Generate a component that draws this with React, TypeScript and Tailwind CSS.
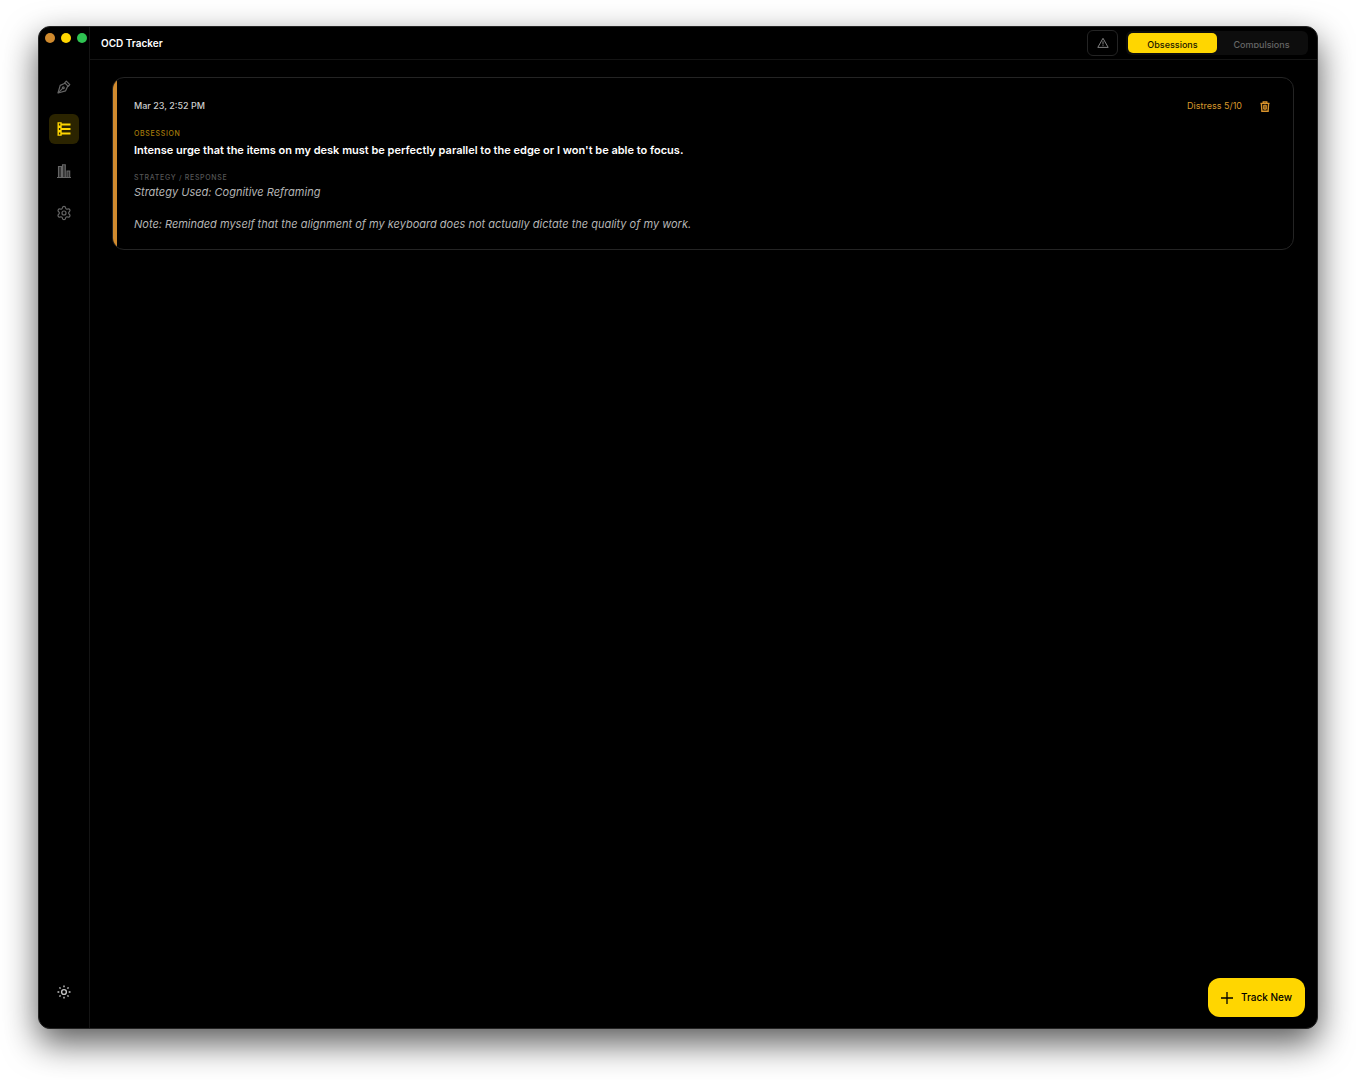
import React, { useState } from 'react'
import { Settings } from 'lucide-react'

type IconProps = { className?: string }

const PenIcon: React.FC<IconProps> = ({ className }) => (
  <svg viewBox="0 0 14 14" fill="none" stroke="currentColor" strokeWidth="1.2" strokeLinejoin="round" className={className}>
    <path d="M9.3 1.2L12.8 4.7L11.2 6.3L7.7 2.8z" />
    <path d="M8 3.2L3.2 5.4L1 13L8.6 10.8L10.8 6" />
    <path d="M1.2 12.8L5.6 8.4" />
    <circle cx="6.3" cy="7.7" r=".9" />
  </svg>
)

const ListIcon: React.FC<IconProps> = ({ className }) => (
  <svg viewBox="0 0 14 14" fill="none" stroke="currentColor" className={className}>
    <path d="M4 2.5H13.5M4 7H13.5M4 11.5H13.5" strokeWidth="1.8" />
    <path d="M1.2 .9h2.8v3.2H1.2zM1.2 5.4h2.8v3.2H1.2zM1.2 9.9h2.8v3.2H1.2z" strokeWidth="1.4" />
  </svg>
)

const ChartIcon: React.FC<IconProps> = ({ className }) => (
  <svg viewBox="0 0 14 14" fill="none" stroke="currentColor" className={className}>
    <path d="M0 13.5H14" strokeWidth="1" />
    <path d="M1.5 13V2.5H4.5V13M5.5 13V.8H8.3V13M10 13V7h2.7v6" strokeWidth="1.1" />
    <path d="M1.5 3H5V13H1.5zM5.5 1h2.8v12H5.5zM10 7h2.7v6H10z" fill="currentColor" fillOpacity="0.5" stroke="none" />
  </svg>
)

const WarningIcon: React.FC<IconProps> = ({ className }) => (
  <svg viewBox="0 0 12 12" fill="none" stroke="currentColor" className={className}>
    <path d="M6 1.3L11.2 10.4H.8z" strokeWidth="1" strokeLinejoin="round" />
    <path d="M6 4.3V7.5M6 8.2V9.2" strokeWidth="1" />
  </svg>
)

const TrashIcon: React.FC<IconProps> = ({ className }) => (
  <svg viewBox="0 0 10 11" fill="none" stroke="currentColor" className={className}>
    <path d="M.5 2.3H9.5M3.2 2V.8H6.8V2" strokeWidth="1.3" />
    <path d="M1.4 2.5L1.9 10.2H8.1L8.6 2.5" strokeWidth="1.4" />
    <path d="M3.7 4.2h2.6v4H3.7z" strokeWidth="1" fill="currentColor" fillOpacity="0.6" />
  </svg>
)

const SunIcon: React.FC<IconProps> = ({ className }) => (
  <svg viewBox="0 0 14 14" fill="none" stroke="currentColor" strokeWidth="1.4" className={className}>
    <circle cx="7" cy="7" r="2.4" />
    <path d="M7 .5V2.3M7 11.7V13.5M.5 7H2.3M11.7 7H13.5M2.4 2.4L3.6 3.6M10.4 10.4L11.6 11.6M2.4 11.6L3.6 10.4M10.4 3.6L11.6 2.4" />
  </svg>
)

const PlusIcon: React.FC<IconProps> = ({ className }) => (
  <svg viewBox="0 0 12 12" fill="none" stroke="currentColor" strokeWidth="1.3" className={className}>
    <path d="M6 0V12M0 6H12" />
  </svg>
)

const navItems = [
  { label: 'Write', icon: <PenIcon className="size-3.5" /> },
  { label: 'Entries', icon: <ListIcon className="size-3.5" /> },
  { label: 'Statistics', icon: <ChartIcon className="size-3.5" /> },
  { label: 'Settings', icon: <Settings className="size-4" strokeWidth={1.8} /> },
]

const tabs = ['Obsessions', 'Compulsions']

const Sidebar: React.FC = () => {
  const [active, setActive] = useState('Entries')

  return (
    <aside className="flex w-[51px] shrink-0 flex-col items-center border-r border-[#141414] pb-[21px]">
      <div className="flex gap-1.5 self-start pt-1.5 pl-1.5">
        <span className="size-2.5 rounded-full bg-[#d08a2e]" />
        <span className="size-2.5 rounded-full bg-[#ffd600]" />
        <span className="size-2.5 rounded-full bg-[#2fc352]" />
      </div>
      <nav className="mt-[29px] flex flex-col gap-3">
        {navItems.map((item) => (
          <button
            key={item.label}
            aria-label={item.label}
            onClick={() => setActive(item.label)}
            className={
              active === item.label
                ? 'flex size-[30px] items-center justify-center rounded-md bg-[#2b2400] text-[#ffd600]'
                : 'flex size-[30px] items-center justify-center rounded-md text-[#666666]'
            }
          >
            {item.icon}
          </button>
        ))}
      </nav>
      <button aria-label="Theme" className="mt-auto flex size-[30px] items-center justify-center text-[#c4c4c4]">
        <SunIcon className="size-3.5" />
      </button>
    </aside>
  )
}

const Header: React.FC = () => {
  const [tab, setTab] = useState('Obsessions')

  return (
    <header className="flex h-[33px] shrink-0 items-center border-b border-[#141414] pr-[9px] pl-[11px]">
      <h1 className="text-[10px] font-semibold text-white">OCD Tracker</h1>
      <button
        aria-label="Alerts"
        className="ml-auto flex h-[26px] w-[31px] items-center justify-center rounded-md border border-[#242424] text-[#808080]"
      >
        <WarningIcon className="size-3" />
      </button>
      <div className="ml-2 flex h-6 w-[182px] rounded-md bg-[#0d0d0d] p-0.5">
        {tabs.map((name) => (
          <button
            key={name}
            onClick={() => setTab(name)}
            className={
              tab === name
                ? 'flex flex-1 justify-center rounded-[5px] bg-[#ffd600] pt-[5px] text-[#1a1600]'
                : 'flex flex-1 justify-center rounded-[5px] pt-[5px] text-[#666666]'
            }
          >
            <span className="h-2.5 overflow-hidden text-[9px] leading-[14px] font-medium">{name}</span>
          </button>
        ))}
      </div>
    </header>
  )
}

const EntryCard: React.FC = () => {
  return (
    <article className="flex overflow-hidden rounded-xl border border-[#242424]">
      <div className="w-1 shrink-0 bg-[#d08a2e]" />
      <div className="flex-1 pt-5 pr-[23px] pb-[17px] pl-[17px]">
        <div className="flex h-4 items-center">
          <time className="text-[9px] font-medium text-[#cccccc]">Mar 23, 2:52 PM</time>
          <span className="ml-auto text-[9px] text-[#d9982b]">Distress 5/10</span>
          <button aria-label="Delete" className="ml-[18px] text-[#d9932b]">
            <TrashIcon className="h-[11px] w-2.5" />
          </button>
        </div>
        <h2 className="mt-3.5 text-[7px] leading-3 font-medium tracking-widest text-[#a67c0a]">OBSESSION</h2>
        <p className="text-[11px] leading-5 font-semibold text-white">
          Intense urge that the items on my desk must be perfectly parallel to the edge or I won't be able to focus.
        </p>
        <h2 className="mt-3 text-[7px] leading-3 font-medium tracking-widest text-[#555555]">STRATEGY / RESPONSE</h2>
        <p className="text-[11px] leading-4 whitespace-pre-line text-[#b5b5b5] italic">
          {'Strategy Used: Cognitive Reframing\n\nNote: Reminded myself that the alignment of my keyboard does not actually dictate the quality of my work.'}
        </p>
      </div>
    </article>
  )
}

export default function App() {
  return (
    <div className="flex min-h-screen bg-white px-[38px] pt-[26px] pb-[51px] font-['Inter',sans-serif]">
      <div className="flex flex-1 overflow-hidden rounded-xl border border-[#242424] bg-black shadow-[0_14px_34px_rgba(0,0,0,0.65)]">
        <Sidebar />
        <div className="flex flex-1 flex-col">
          <Header />
          <main className="flex flex-1 flex-col pt-[17px] pr-[23px] pl-[22px]">
            <EntryCard />
          </main>
          <button className="mr-3 mb-[11px] flex h-[39px] items-center gap-2 self-end rounded-xl bg-[#ffd600] px-[13px] text-[10px] font-medium text-black">
            <PlusIcon className="size-3" />
            Track New
          </button>
        </div>
      </div>
    </div>
  )
}
